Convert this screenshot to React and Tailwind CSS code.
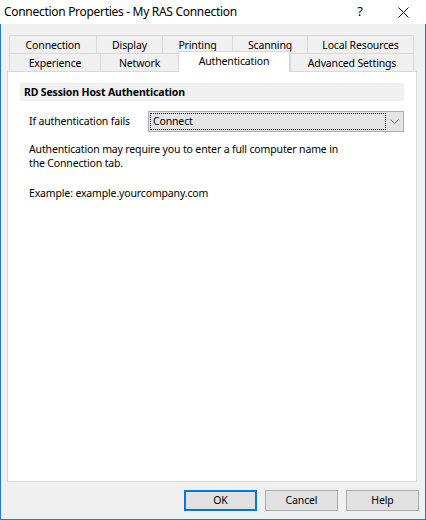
import React from 'react';

const row1 = [
  { label: 'Connection', w: 'w-[87px]' },
  { label: 'Display', w: 'w-[66px]' },
  { label: 'Printing', w: 'w-[70px]' },
  { label: 'Scanning', w: 'w-[75px]' },
  { label: 'Local Resources', w: 'w-[107px]' },
];

const row2 = [
  { label: 'Experience', w: 'w-[91px]' },
  { label: 'Network', w: 'w-[78px]' },
  { label: 'Authentication', w: 'w-[112px]', active: true },
  { label: 'Advanced Settings', w: 'w-[124px]' },
];

const Tab = ({ label, w, active, last }) => {
  if (active) {
    return (
      <div
        className={`${w} relative z-10 -mt-[2px] h-[21px] bg-white border-t border-l border-r border-[#d9d9d9] flex justify-center pt-[1px] leading-[16px]`}
      >
        {label}
      </div>
    );
  }
  return (
    <div
      className={`${w} h-[18px] border-t border-l ${last ? 'border-r' : ''} border-[#d9d9d9] flex items-center justify-center leading-[16px]`}
    >
      {label}
    </div>
  );
};

const Button = ({ children, primary }) => (
  <button
    className={`w-[73px] h-[21px] bg-[#e1e1e1] text-black leading-none flex items-center justify-center ${
      primary ? 'border-2 border-[#0078d7]' : 'border border-[#adadad]'
    }`}
  >
    {children}
  </button>
);

export default function App() {
  return (
    <div className="w-[426px] h-[520px] flex flex-col bg-[#f0f0f0] text-[10.5px] tracking-[-0.15px] text-black font-['Noto_Sans',sans-serif]">
      {/* title bar */}
      <div className="h-[24px] bg-white flex items-center shrink-0">
        <div className="pl-[4px] text-[12px] tracking-[-0.3px] text-black flex-1">
          Connection Properties - My RAS Connection
        </div>
        <div className="w-[46px] h-full flex items-center justify-center text-[13px] pl-[6px]">?</div>
        <div className="w-[46px] h-full flex items-center justify-center">
          <svg width="11" height="11" viewBox="0 0 11 11">
            <path d="M0.5 0.5 L10.5 10.5 M10.5 0.5 L0.5 10.5" stroke="#111" strokeWidth="1" />
          </svg>
        </div>
      </div>

      {/* window body */}
      <div className="flex-1 flex flex-col border-l border-r border-b border-[#1a7ad4]">
        {/* tabs */}
        <div className="pt-[11px] pl-[8px]">
          <div className="flex">
            {row1.map((t, i) => (
              <Tab key={t.label} {...t} last={i === row1.length - 1} />
            ))}
          </div>
          <div className="flex items-start h-[18px]">
            {row2.map((t, i) => (
              <Tab key={t.label} {...t} last={i === row2.length - 1} />
            ))}
          </div>
        </div>

        {/* panel */}
        <div className="ml-[6px] w-[410px] h-[411px] bg-white border border-[#d9d9d9] pt-[11px] px-[12px]">
          <div className="h-[18px] bg-[#f0f0f0] flex items-center pl-[4px] font-bold leading-none">
            RD Session Host Authentication
          </div>

          <div className="flex items-center mt-[10px] pl-[9px]">
            <div className="w-[119px]">If authentication fails</div>
            <div className="w-[256px] h-[21px] bg-[#e5e5e5] border border-[#adadad] flex items-center">
              <div className="ml-[1px] w-[236px] h-[17px] border border-dotted border-black flex items-center pl-[2px] leading-none">
                Connect
              </div>
              <div className="flex-1 flex items-center justify-center">
                <svg width="9" height="6" viewBox="0 0 9 6">
                  <path d="M0.5 0.5 L4.5 4.5 L8.5 0.5" fill="none" stroke="#606060" strokeWidth="1" />
                </svg>
              </div>
            </div>
          </div>

          <div className="pl-[9px] mt-[10px] leading-[14px]">
            <p>Authentication may require you to enter a full computer name in</p>
            <p>the Connection tab.</p>
            <p className="mt-[16px]">Example: example.yourcompany.com</p>
          </div>
        </div>

        {/* buttons */}
        <div className="flex justify-end gap-[8px] pr-[6px] mt-[8px]">
          <Button primary>OK</Button>
          <Button>Cancel</Button>
          <Button>Help</Button>
        </div>
      </div>
    </div>
  );
}
